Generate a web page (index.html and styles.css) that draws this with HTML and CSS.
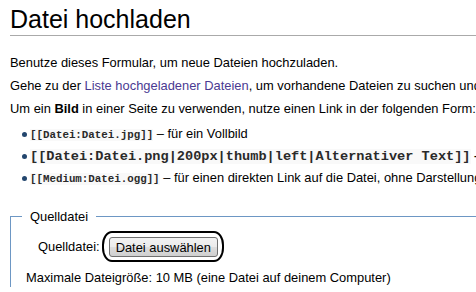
FILE: index.html
```html
<!DOCTYPE html>
<html lang="de">
<head>
<meta charset="utf-8">
<title>Datei hochladen</title>
<link rel="stylesheet" href="styles.css">
</head>
<body>
<div class="page">
  <h1 class="title">Datei hochladen</h1>
  <p class="para">Benutze dieses Formular, um neue Dateien hochzuladen.</p>
  <p class="para">Gehe zu der <a class="link" href="#">Liste hochgeladener Dateien</a>, um vorhandene Dateien zu suchen und anzuzeigen.</p>
  <p class="para">Um ein <b>Bild</b> in einer Seite zu verwenden, nutze einen Link in der folgenden Form:</p>
  <ul class="list">
    <li class="item"><code class="code">[[Datei:Datei.jpg]]</code> – für ein Vollbild</li>
    <li class="item item-big"><code class="code">[[Datei:Datei.png|200px|thumb|left|Alternativer Text]]</code> – für ein 200 Pixel breites Bild</li>
    <li class="item"><code class="code">[[Medium:Datei.ogg]]</code> – für einen direkten Link auf die Datei, ohne Darstellung der Datei</li>
  </ul>
  <fieldset class="box">
    <legend class="legend">Quelldatei</legend>
    <div class="row">
      <span class="label">Quelldatei:</span>
      <span class="mark"><button class="btn" type="button">Datei auswählen</button></span>
    </div>
    <p class="hint">Maximale Dateigröße: 10 MB (eine Datei auf deinem Computer)</p>
  </fieldset>
</div>
</body>
</html>
```
FILE: styles.css
```css
html, body {
  margin: 0;
  padding: 0;
  background: #fff;
  overflow: hidden;
}
body {
  width: 476px;
  height: 292px;
  font-family: "Liberation Sans", Arial, sans-serif;
  font-size: 12.9px;
  color: #000;
}
.page {
  padding: 4px 0 0 10px;
  width: 700px;
}
.title {
  margin: 0;
  font-size: 25px;
  font-weight: normal;
  line-height: 30px;
  padding-bottom: 1px;
  border-bottom: 1px solid #aaa;
}
.para {
  margin: 0 0 4px;
  line-height: 19px;
  white-space: nowrap;
}
.title + .para {
  margin-top: 17px;
}
.link {
  color: #4a3a92;
  text-decoration: none;
}
.list {
  list-style: none;
  margin: 6px 0 0;
  padding: 0 0 0 20px;
}
.item {
  position: relative;
  height: 19px;
  line-height: 19px;
  margin-bottom: 3px;
  white-space: nowrap;
}
.item::before {
  content: "";
  position: absolute;
  left: -8px;
  top: 8px;
  width: 5px;
  height: 5px;
  border-radius: 50%;
  background: #23466e;
}
.code {
  font-family: "Liberation Mono", "Courier New", monospace;
  font-size: 10.8px;
  line-height: 19px;
  font-weight: bold;
  color: #2a2a2a;
  background: #f9f9f9;
}
.item-big .code {
  font-size: 13.6px;
}
.item-big {
  font-weight: bold;
}
.box {
  margin: 20px 0 0;
  padding: 0 11px 0 11px;
  border: 1px solid #6d97c4;
  border-right: none;
  border-bottom: none;
}
.legend {
  padding: 0 8px;
  line-height: 19px;
}
.row {
  display: flex;
  align-items: center;
  padding: 5px 0 0 16px;
}
.label {
  margin-right: 2px;
}
.mark {
  display: inline-flex;
  border: 2px solid #000;
  border-radius: 10px / 14px;
  padding: 4px 4px 3px 5px;
}
.btn {
  font-family: "Liberation Sans", Arial, sans-serif;
  font-size: 12.9px;
  color: #000;
  height: 20px;
  padding: 0 6px;
  border: 1px solid #707070;
  border-radius: 3px;
  background: linear-gradient(#f2f2f2 0%, #ebebeb 48%, #dddddd 52%, #cfcfcf 100%);
}
.hint {
  margin: 6px 0 0 4px;
  line-height: 19px;
  white-space: nowrap;
}
```
